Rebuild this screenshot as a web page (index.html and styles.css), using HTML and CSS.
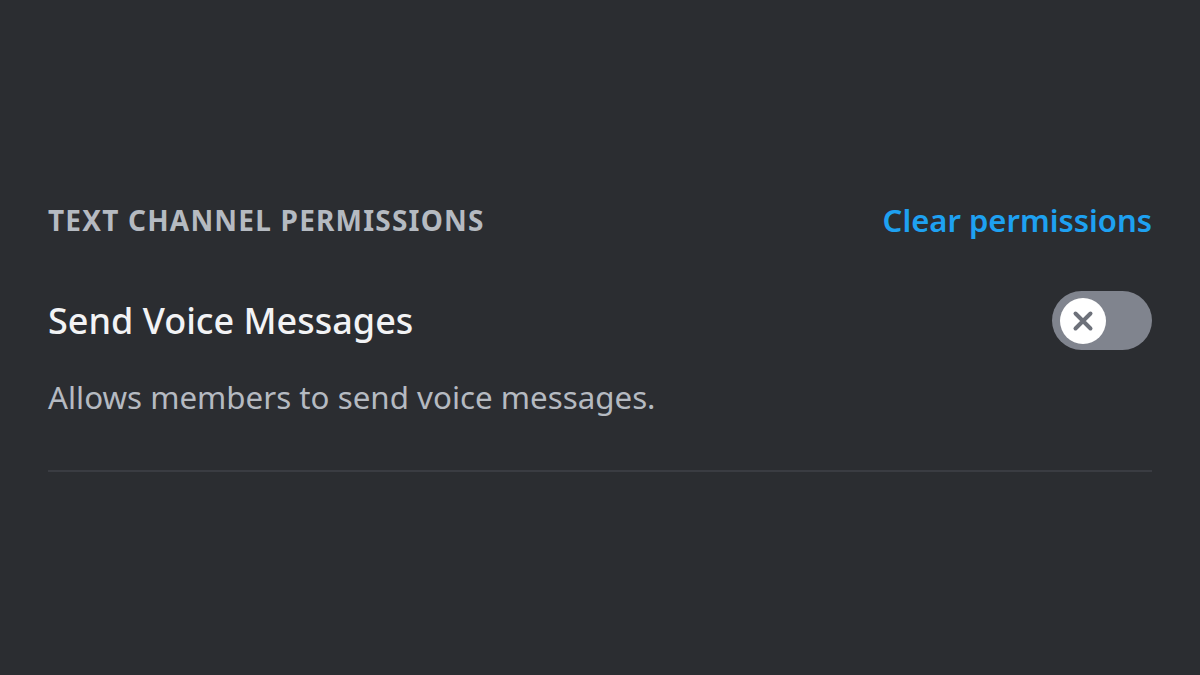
FILE: index.html
```html
<!DOCTYPE html>
<html lang="en">
<head>
  <meta charset="UTF-8">
  <meta name="viewport" content="width=device-width, initial-scale=1.0">
  <title>Text Channel Permissions</title>
  <link rel="stylesheet" href="styles.css">
</head>
<body>
  <div class="container">
    <div class="section-header">
      <div class="section-title">Text Channel Permissions</div>
      <a class="clear-link" href="#">Clear permissions</a>
    </div>

    <div class="permission">
      <div class="permission-row">
        <div class="permission-name">Send Voice Messages</div>
        <div class="toggle">
          <div class="toggle-knob">
            <svg width="28" height="28" viewBox="0 0 28 28">
              <path d="M6.5 6.5 L21.5 21.5 M21.5 6.5 L6.5 21.5" stroke="#6d717a" stroke-width="4" stroke-linecap="round" fill="none"/>
            </svg>
          </div>
        </div>
      </div>
      <div class="permission-desc">Allows members to send voice messages.</div>
    </div>
  </div>
</body>
</html>
```

FILE: styles.css
```css
body {
  margin: 0;
  background-color: #2b2d31;
  font-family: "Noto Sans", "Open Sans", sans-serif;
  width: 1200px;
  height: 675px;
  overflow: hidden;
}
.container {
  padding: 200px 48px 0 48px;
}
.section-header {
  display: flex;
  justify-content: space-between;
  align-items: center;
  height: 40px;
}
.section-title {
  color: #b5bac1;
  font-size: 28px;
  font-weight: 700;
  text-transform: uppercase;
  letter-spacing: 1.2px;
}
.clear-link {
  color: #1ea1f1;
  font-size: 31px;
  font-weight: 600;
  text-decoration: none;
}
.permission {
  margin-top: 51px;
  padding-bottom: 53px;
  border-bottom: 2px solid #3a3c42;
}
.permission-row {
  display: flex;
  justify-content: space-between;
  align-items: center;
}
.permission-name {
  color: #f2f3f5;
  font-size: 36px;
  font-weight: 500;
}
.toggle {
  width: 100px;
  height: 59px;
  border-radius: 30px;
  background-color: #80848e;
  display: flex;
  align-items: center;
  padding-left: 8px;
  box-sizing: border-box;
}
.toggle-knob {
  width: 46px;
  height: 46px;
  border-radius: 50%;
  background-color: #ffffff;
  display: flex;
  align-items: center;
  justify-content: center;
}
.permission-desc {
  color: #b5bac1;
  font-size: 31.3px;
  line-height: 40px;
  margin-top: 27px;
}
```
